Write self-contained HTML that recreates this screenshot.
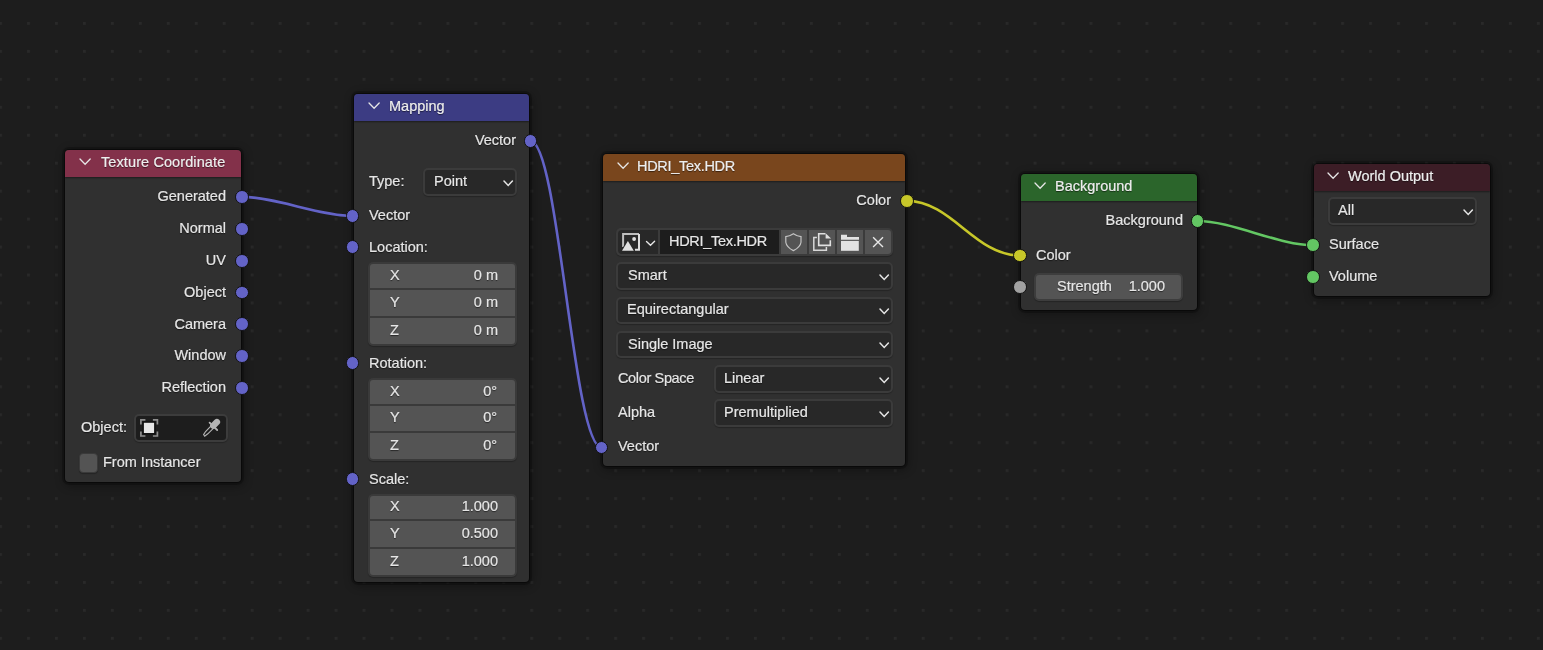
<!DOCTYPE html><html><head><meta charset="utf-8"><style>
html,body{margin:0;padding:0;}
body{width:1543px;height:650px;overflow:hidden;position:relative;background:#1d1d1d;font-family:"Liberation Sans",sans-serif;}
.a{position:absolute;overflow:visible;}
.t{position:absolute;line-height:20px;height:20px;white-space:nowrap;will-change:transform;-webkit-text-stroke:0.2px currentColor;text-shadow:0 1px 1px rgba(0,0,0,.55);}
.node{position:absolute;background:#303030;border-radius:4px;box-shadow:0 0 0 1px rgba(0,0,0,.42),0 0 0 3px rgba(0,0,0,.22),1px 2px 10px 2px rgba(0,0,0,.32);overflow:hidden;}
.hdr{position:absolute;left:0;top:0;right:0;box-shadow:0 1px 1.5px rgba(0,0,0,.4);}
.sock{position:absolute;border-radius:50%;box-sizing:border-box;border:1.3px solid #111;}
.dd{position:absolute;background:#282828;border:2px solid #3b3b3b;border-radius:5px;box-sizing:border-box;box-shadow:0 1px 1px rgba(0,0,0,.25);}
.nb{position:absolute;background:#545454;border:2px solid #3a3a3a;box-sizing:border-box;border-radius:5px;box-shadow:0 1px 1px rgba(0,0,0,.25);}
.btn{position:absolute;background:#545454;}
</style></head><body>

<svg class="a" style="left:0;top:0" width="1543" height="650"><defs><pattern id="g" x="-0.9" y="22" width="27.96" height="27.95" patternUnits="userSpaceOnUse"><rect x="0" y="0" width="2.8" height="2.8" fill="#292929"/></pattern></defs><rect width="1543" height="650" fill="url(#g)"/></svg>
<svg class="a" style="left:0;top:0" width="1543" height="650">
<path d="M241.9,196.9 C275.11,196.9 319.39,215.9 352.6,215.9" stroke="#6363c7" stroke-width="2.6" fill="none"/>
<path d="M530.4,140.9 C558.84,140.9 573.06,447.5 601.5,447.5" stroke="#6363c7" stroke-width="2.6" fill="none"/>
<path d="M906.7,200.9 C951.9,200.9 974.5,255.4 1019.7,255.4" stroke="#c7c729" stroke-width="2.6" fill="none"/>
<path d="M1197.55,221.0 C1232.24,221.0 1278.51,245.3 1313.2,245.3" stroke="#63c763" stroke-width="2.6" fill="none"/>
</svg>
<div class="node" style="left:65px;top:150px;width:176.1px;height:332px"><div class="hdr" style="height:27px;background:#83314a"></div></div>
<svg class="a" style="left:77.45px;top:156.25px" width="16.2" height="11.2"><polyline points="3,3 8.1,8.2 13.2,3" fill="none" stroke="#e6e6e6" stroke-width="1.3" stroke-linecap="round" stroke-linejoin="miter"/></svg>
<div class="t" style="left:101px;top:152.0px;font-size:14.5px;color:#eeeeee;letter-spacing:0.1px;">Texture Coordinate</div>
<div class="t" style="left:-173.8px;width:400px;text-align:right;top:186.1px;font-size:14.5px;color:#e6e6e6;">Generated</div>
<div class="t" style="left:-173.8px;width:400px;text-align:right;top:217.97px;font-size:14.5px;color:#e6e6e6;">Normal</div>
<div class="t" style="left:-173.8px;width:400px;text-align:right;top:249.84px;font-size:14.5px;color:#e6e6e6;">UV</div>
<div class="t" style="left:-173.8px;width:400px;text-align:right;top:281.71px;font-size:14.5px;color:#e6e6e6;">Object</div>
<div class="t" style="left:-173.8px;width:400px;text-align:right;top:313.58px;font-size:14.5px;color:#e6e6e6;">Camera</div>
<div class="t" style="left:-173.8px;width:400px;text-align:right;top:345.45px;font-size:14.5px;color:#e6e6e6;">Window</div>
<div class="t" style="left:-173.8px;width:400px;text-align:right;top:377.32px;font-size:14.5px;color:#e6e6e6;">Reflection</div>
<div class="t" style="left:80.5px;top:417.0px;font-size:14.5px;color:#e6e6e6;">Object:</div>
<div class="dd" style="left:134.1px;top:414.1px;width:93.6px;height:27.9px;background:#1d1d1d;border-width:2px;border-color:#3c3c3c"></div>
<div class="a" style="left:78.6px;top:453.2px;width:19px;height:19.6px;background:#545454;border-radius:4px;box-sizing:border-box;border:1.6px solid #3a3a3a;box-shadow:0 1px 1px rgba(0,0,0,.25)"></div>
<div class="t" style="left:102.9px;top:452.0px;font-size:14.5px;color:#e6e6e6;">From Instancer</div>
<div class="node" style="left:354px;top:94px;width:175.20000000000005px;height:487.9px"><div class="hdr" style="height:27px;background:#3c3c83"></div></div>
<svg class="a" style="left:366.15px;top:100.25px" width="16.2" height="11.2"><polyline points="3,3 8.1,8.2 13.2,3" fill="none" stroke="#e6e6e6" stroke-width="1.3" stroke-linecap="round" stroke-linejoin="miter"/></svg>
<div class="t" style="left:389.4px;top:96.0px;font-size:14.5px;color:#eeeeee;">Mapping</div>
<div class="t" style="left:115.6px;width:400px;text-align:right;top:130.4px;font-size:14.5px;color:#e6e6e6;">Vector</div>
<div class="t" style="left:369.2px;top:170.8px;font-size:14.5px;color:#e6e6e6;">Type:</div>
<div class="dd" style="left:423.4px;top:168.4px;width:93.2px;height:27.4px"></div>
<div class="t" style="left:434.2px;top:170.9px;font-size:14.5px;color:#e6e6e6;">Point</div>
<svg class="a" style="left:500.5px;top:177.79999999999998px" width="14.4" height="10.5"><polyline points="3,3 7.2,7.5 11.4,3" fill="none" stroke="#e6e6e6" stroke-width="1.5" stroke-linecap="round" stroke-linejoin="miter"/></svg>
<div class="t" style="left:369.2px;top:205.0px;font-size:14.5px;color:#e6e6e6;">Vector</div>
<div class="t" style="left:369.2px;top:236.7px;font-size:14.5px;color:#e6e6e6;">Location:</div>
<div class="nb" style="left:368px;top:262.3px;width:148.8px;height:83.4px"></div>
<div class="a" style="left:368px;top:287.9px;width:148.8px;height:2px;background:#3a3a3a"></div>
<div class="a" style="left:368px;top:315.6px;width:148.8px;height:2px;background:#3a3a3a"></div>
<div class="t" style="left:389.5px;top:264.9px;font-size:14.5px;color:#e6e6e6;">X</div>
<div class="t" style="left:98.1px;width:400px;text-align:right;top:264.9px;font-size:14.5px;color:#e6e6e6;">0 m</div>
<div class="t" style="left:389.5px;top:291.8px;font-size:14.5px;color:#e6e6e6;">Y</div>
<div class="t" style="left:98.1px;width:400px;text-align:right;top:291.8px;font-size:14.5px;color:#e6e6e6;">0 m</div>
<div class="t" style="left:389.5px;top:319.5px;font-size:14.5px;color:#e6e6e6;">Z</div>
<div class="t" style="left:98.1px;width:400px;text-align:right;top:319.5px;font-size:14.5px;color:#e6e6e6;">0 m</div>
<div class="t" style="left:369.2px;top:352.6px;font-size:14.5px;color:#e6e6e6;">Rotation:</div>
<div class="nb" style="left:368px;top:377.95px;width:148.8px;height:83.4px"></div>
<div class="a" style="left:368px;top:403.55px;width:148.8px;height:2px;background:#3a3a3a"></div>
<div class="a" style="left:368px;top:431.25px;width:148.8px;height:2px;background:#3a3a3a"></div>
<div class="t" style="left:389.5px;top:380.55px;font-size:14.5px;color:#e6e6e6;">X</div>
<div class="t" style="left:97.2px;width:400px;text-align:right;top:380.55px;font-size:14.5px;color:#e6e6e6;">0°</div>
<div class="t" style="left:389.5px;top:407.45px;font-size:14.5px;color:#e6e6e6;">Y</div>
<div class="t" style="left:97.2px;width:400px;text-align:right;top:407.45px;font-size:14.5px;color:#e6e6e6;">0°</div>
<div class="t" style="left:389.5px;top:435.15px;font-size:14.5px;color:#e6e6e6;">Z</div>
<div class="t" style="left:97.2px;width:400px;text-align:right;top:435.15px;font-size:14.5px;color:#e6e6e6;">0°</div>
<div class="t" style="left:369.2px;top:468.5px;font-size:14.5px;color:#e6e6e6;">Scale:</div>
<div class="nb" style="left:368px;top:493.6px;width:148.8px;height:83.4px"></div>
<div class="a" style="left:368px;top:519.2px;width:148.8px;height:2px;background:#3a3a3a"></div>
<div class="a" style="left:368px;top:546.9px;width:148.8px;height:2px;background:#3a3a3a"></div>
<div class="t" style="left:389.5px;top:496.2px;font-size:14.5px;color:#e6e6e6;">X</div>
<div class="t" style="left:98.1px;width:400px;text-align:right;top:496.2px;font-size:14.5px;color:#e6e6e6;">1.000</div>
<div class="t" style="left:389.5px;top:523.1px;font-size:14.5px;color:#e6e6e6;">Y</div>
<div class="t" style="left:98.1px;width:400px;text-align:right;top:523.1px;font-size:14.5px;color:#e6e6e6;">0.500</div>
<div class="t" style="left:389.5px;top:550.8px;font-size:14.5px;color:#e6e6e6;">Z</div>
<div class="t" style="left:98.1px;width:400px;text-align:right;top:550.8px;font-size:14.5px;color:#e6e6e6;">1.000</div>
<div class="node" style="left:603px;top:154px;width:302.29999999999995px;height:312.4px"><div class="hdr" style="height:27px;background:#79461d"></div></div>
<svg class="a" style="left:615.15px;top:160.25px" width="16.2" height="11.2"><polyline points="3,3 8.1,8.2 13.2,3" fill="none" stroke="#e6e6e6" stroke-width="1.3" stroke-linecap="round" stroke-linejoin="miter"/></svg>
<div class="t" style="left:637.4px;top:156.0px;font-size:14.5px;color:#eeeeee;letter-spacing:-0.3px;">HDRI_Tex.HDR</div>
<div class="t" style="left:491.3px;width:400px;text-align:right;top:190.2px;font-size:14.5px;color:#e6e6e6;">Color</div>
<div class="a" style="left:615.9px;top:228.4px;width:276.9px;height:27.4px;background:#3b3b3b;border-radius:5px;box-shadow:0 1px 1px rgba(0,0,0,.25)"></div>
<div class="a" style="left:618.1px;top:229.9px;width:39.85px;height:23.95px;background:#282828;border-radius:4px 0 0 4px"></div>
<div class="a" style="left:659.9px;top:229.9px;width:119px;height:23.95px;background:#1d1d1d"></div>
<div class="btn" style="left:781.1px;top:229.9px;width:26.0px;height:23.95px"></div>
<div class="btn" style="left:809px;top:229.9px;width:25.95px;height:23.95px"></div>
<div class="btn" style="left:837.1px;top:229.9px;width:25.95px;height:23.95px"></div>
<div class="btn" style="left:865px;top:229.9px;width:25.9px;height:23.95px;border-radius:0 3px 3px 0"></div>
<div class="t" style="left:668.7px;top:230.7px;font-size:14.5px;color:#e6e6e6;letter-spacing:-0.3px;">HDRI_Tex.HDR</div>
<div class="dd" style="left:616.2px;top:262.4px;width:276.6px;height:27.4px"></div>
<div class="t" style="left:627.7px;top:264.9px;font-size:14.5px;color:#e6e6e6;">Smart</div>
<svg class="a" style="left:876.6999999999999px;top:271.8px" width="14.4" height="10.5"><polyline points="3,3 7.2,7.5 11.4,3" fill="none" stroke="#e6e6e6" stroke-width="1.5" stroke-linecap="round" stroke-linejoin="miter"/></svg>
<div class="dd" style="left:616.2px;top:296.65px;width:276.6px;height:27.4px"></div>
<div class="t" style="left:626.5px;top:299.15px;font-size:14.5px;color:#e6e6e6;">Equirectangular</div>
<svg class="a" style="left:876.6999999999999px;top:306.05px" width="14.4" height="10.5"><polyline points="3,3 7.2,7.5 11.4,3" fill="none" stroke="#e6e6e6" stroke-width="1.5" stroke-linecap="round" stroke-linejoin="miter"/></svg>
<div class="dd" style="left:616.2px;top:330.9px;width:276.6px;height:27.4px"></div>
<div class="t" style="left:627.7px;top:334.0px;font-size:14.5px;color:#e6e6e6;">Single Image</div>
<svg class="a" style="left:876.6999999999999px;top:340.3px" width="14.4" height="10.5"><polyline points="3,3 7.2,7.5 11.4,3" fill="none" stroke="#e6e6e6" stroke-width="1.5" stroke-linecap="round" stroke-linejoin="miter"/></svg>
<div class="t" style="left:618.1px;top:367.8px;font-size:14.5px;color:#e6e6e6;letter-spacing:-0.35px;">Color Space</div>
<div class="dd" style="left:713.5px;top:365.15px;width:179.3px;height:27.4px"></div>
<div class="t" style="left:724.2px;top:367.65px;font-size:14.5px;color:#e6e6e6;">Linear</div>
<svg class="a" style="left:876.6999999999999px;top:374.55px" width="14.4" height="10.5"><polyline points="3,3 7.2,7.5 11.4,3" fill="none" stroke="#e6e6e6" stroke-width="1.5" stroke-linecap="round" stroke-linejoin="miter"/></svg>
<div class="t" style="left:618.1px;top:402.0px;font-size:14.5px;color:#e6e6e6;">Alpha</div>
<div class="dd" style="left:713.5px;top:399.4px;width:179.3px;height:27.4px"></div>
<div class="t" style="left:724.2px;top:401.9px;font-size:14.5px;color:#e6e6e6;">Premultiplied</div>
<svg class="a" style="left:876.6999999999999px;top:408.8px" width="14.4" height="10.5"><polyline points="3,3 7.2,7.5 11.4,3" fill="none" stroke="#e6e6e6" stroke-width="1.5" stroke-linecap="round" stroke-linejoin="miter"/></svg>
<div class="t" style="left:618.1px;top:436.2px;font-size:14.5px;color:#e6e6e6;">Vector</div>
<div class="node" style="left:1021px;top:174px;width:175.5px;height:135.8px"><div class="hdr" style="height:27px;background:#2b652b"></div></div>
<svg class="a" style="left:1031.65px;top:180.25px" width="16.2" height="11.2"><polyline points="3,3 8.1,8.2 13.2,3" fill="none" stroke="#e6e6e6" stroke-width="1.3" stroke-linecap="round" stroke-linejoin="miter"/></svg>
<div class="t" style="left:1055.1px;top:176.0px;font-size:14.5px;color:#eeeeee;">Background</div>
<div class="t" style="left:782.8px;width:400px;text-align:right;top:210.1px;font-size:14.5px;color:#e6e6e6;">Background</div>
<div class="t" style="left:1035.6px;top:244.8px;font-size:14.5px;color:#e6e6e6;">Color</div>
<div class="nb" style="left:1034.1px;top:272.8px;width:149.4px;height:28px;border-color:#3d3d3d"></div>
<div class="t" style="left:1056.7px;top:275.6px;font-size:14.5px;color:#e6e6e6;">Strength</div>
<div class="t" style="left:765.2px;width:400px;text-align:right;top:275.6px;font-size:14.5px;color:#e6e6e6;">1.000</div>
<div class="node" style="left:1314.3px;top:164px;width:176.20000000000005px;height:131.7px"><div class="hdr" style="height:27px;background:#3c1d26"></div></div>
<svg class="a" style="left:1325.15px;top:170.25px" width="16.2" height="11.2"><polyline points="3,3 8.1,8.2 13.2,3" fill="none" stroke="#e6e6e6" stroke-width="1.3" stroke-linecap="round" stroke-linejoin="miter"/></svg>
<div class="t" style="left:1348.1px;top:166.0px;font-size:14.5px;color:#eeeeee;">World Output</div>
<div class="dd" style="left:1327.7px;top:197.4px;width:148.9px;height:27.4px"></div>
<div class="t" style="left:1337.9px;top:199.9px;font-size:14.5px;color:#e6e6e6;">All</div>
<svg class="a" style="left:1460.5px;top:206.79999999999998px" width="14.4" height="10.5"><polyline points="3,3 7.2,7.5 11.4,3" fill="none" stroke="#e6e6e6" stroke-width="1.5" stroke-linecap="round" stroke-linejoin="miter"/></svg>
<div class="t" style="left:1329.0px;top:234.2px;font-size:14.5px;color:#e6e6e6;">Surface</div>
<div class="t" style="left:1329.0px;top:265.9px;font-size:14.5px;color:#e6e6e6;">Volume</div>
<svg class="a" style="left:0;top:0" width="1543" height="650">
<path d="M623.1,247 V234 H639" fill="none" stroke="#bdbdbd" stroke-width="2"/><path d="M639,234 V249.8 H634.9" fill="none" stroke="#dedede" stroke-width="2"/>
<polygon points="627.9,240.9 622,250.8 633.8,250.8" fill="#e0e0e0" stroke="#282828" stroke-width="2" paint-order="stroke"/>
<circle cx="634.1" cy="239" r="1.9" fill="#e0e0e0"/>
<polyline points="646.5,241.4 650.5,245.2 654.6,241.2" fill="none" stroke="#e6e6e6" stroke-width="1.35" stroke-linecap="round"/>
<path d="M793.4,233.7 Q789.6,236.3 785.8,236.6 V242.2 Q786.4,247 793.4,250.6 Q800.4,247 801,242.2 V236.6 Q797.2,236.3 793.4,233.7 Z" fill="none" stroke="#c4c4c4" stroke-width="1.2"/>
<path d="M816.9,237.6 H813.8 V250.2 H826.4 V246.9" fill="none" stroke="#d8d8d8" stroke-width="1.5"/>
<path d="M825.4,233.8 H818.7 V245.4 H830.3 V240.2" fill="none" stroke="#e0e0e0" stroke-width="1.6"/>
<polygon points="825.6,233.2 831.1,238.6 825.6,238.6" fill="#e0e0e0"/>
<path d="M841,234.7 H847 V237 H859 V239.85 H841 Z" fill="#e3e3e3"/>
<rect x="841" y="240.9" width="17.8" height="9.9" fill="#e3e3e3"/>
<path d="M873.1,237.3 L883,247 M883,237.3 L873.1,247" stroke="#e6e6e6" stroke-width="1.4" fill="none"/>
<path d="M140.9,424.4 V419.9 H145.4 M152.9,419.9 H157.4 V424.4 M157.4,431.6 V436 H152.9 M145.4,436 H140.9 V431.6" fill="none" stroke="#8e8e8e" stroke-width="1.7"/>
<rect x="143.2" y="422.1" width="11.6" height="11.6" fill="#e6e6e6" stroke="#0d0d0d" stroke-width="1.3"/>
<line x1="213.3" y1="425.7" x2="216.9" y2="422.1" stroke="#b5b5b5" stroke-width="6.4" stroke-linecap="round"/>
<line x1="209.6" y1="422.6" x2="217.2" y2="430" stroke="#b5b5b5" stroke-width="1.8" stroke-linecap="round"/>
<path d="M211.3,425.6 L205.6,431.5 L203.6,434.6 L204.7,436.2 L207.8,433.8 L213.6,428.2" fill="none" stroke="#b5b5b5" stroke-width="1.1"/>
</svg>
<div class="sock" style="left:235.0px;top:190.0px;width:13.8px;height:13.8px;background:#6363c7"></div>
<div class="sock" style="left:235.0px;top:221.87px;width:13.8px;height:13.8px;background:#6363c7"></div>
<div class="sock" style="left:235.0px;top:253.74px;width:13.8px;height:13.8px;background:#6363c7"></div>
<div class="sock" style="left:235.0px;top:285.61px;width:13.8px;height:13.8px;background:#6363c7"></div>
<div class="sock" style="left:235.0px;top:317.48px;width:13.8px;height:13.8px;background:#6363c7"></div>
<div class="sock" style="left:235.0px;top:349.35px;width:13.8px;height:13.8px;background:#6363c7"></div>
<div class="sock" style="left:235.0px;top:381.22px;width:13.8px;height:13.8px;background:#6363c7"></div>
<div class="sock" style="left:523.5px;top:134.0px;width:13.8px;height:13.8px;background:#6363c7"></div>
<div class="sock" style="left:345.7px;top:209.0px;width:13.8px;height:13.8px;background:#6363c7"></div>
<div class="sock" style="left:345.7px;top:240.4px;width:13.8px;height:13.8px;background:#6363c7"></div>
<div class="sock" style="left:345.7px;top:356.4px;width:13.8px;height:13.8px;background:#6363c7"></div>
<div class="sock" style="left:345.7px;top:472.3px;width:13.8px;height:13.8px;background:#6363c7"></div>
<div class="sock" style="left:899.8px;top:194.0px;width:13.8px;height:13.8px;background:#c7c729"></div>
<div class="sock" style="left:594.6px;top:440.6px;width:13.8px;height:13.8px;background:#6363c7"></div>
<div class="sock" style="left:1190.65px;top:214.1px;width:13.8px;height:13.8px;background:#63c763"></div>
<div class="sock" style="left:1012.8px;top:248.5px;width:13.8px;height:13.8px;background:#c7c729"></div>
<div class="sock" style="left:1012.8px;top:280.3px;width:13.8px;height:13.8px;background:#a1a1a1"></div>
<div class="sock" style="left:1306.3px;top:238.4px;width:13.8px;height:13.8px;background:#63c763"></div>
<div class="sock" style="left:1306.3px;top:270.0px;width:13.8px;height:13.8px;background:#63c763"></div>
</body></html>
